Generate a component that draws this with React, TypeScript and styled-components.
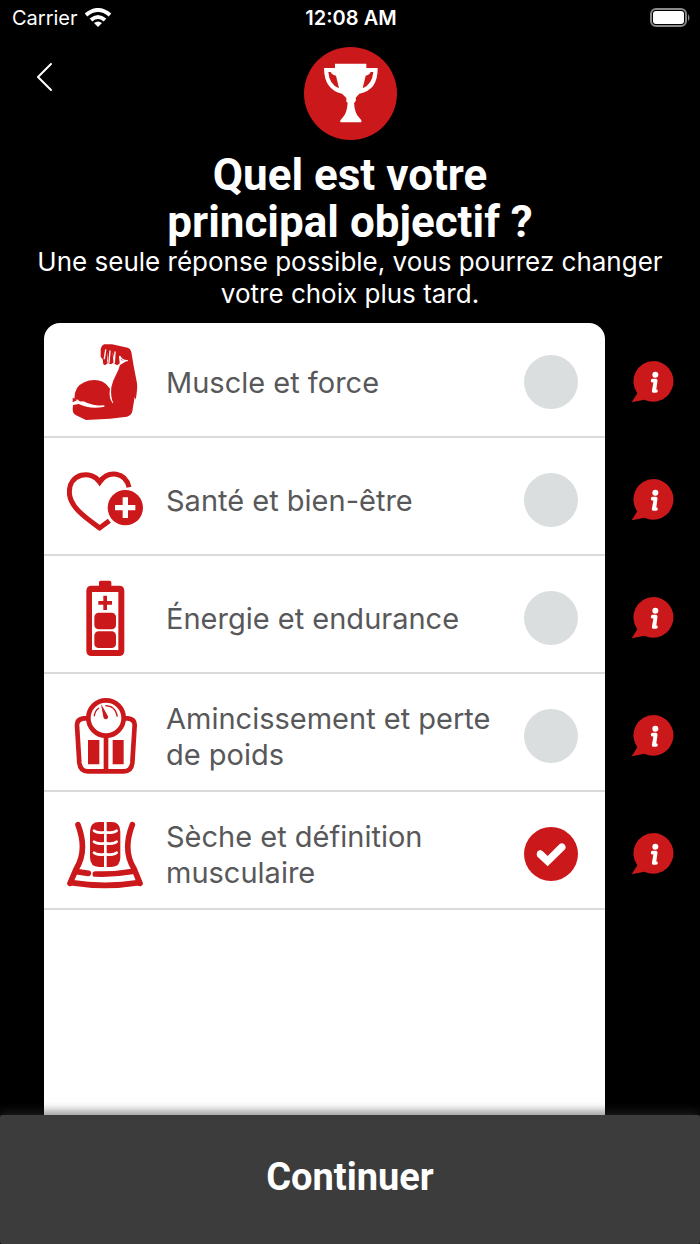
import React, { useState } from 'react';
import styled, { createGlobalStyle } from 'styled-components';

const red = '#cb181b';

const GlobalStyle = createGlobalStyle`
  *, *::before, *::after { box-sizing: border-box; }
  html, body { margin: 0; background: #000; }
  body { font-family: Inter, "Noto Sans", sans-serif; color: #fff; }
`;

const Screen = styled.div`
  display: flex;
  flex-direction: column;
  min-height: 100vh;
  background: #000;
`;

const StatusBar = styled.div`
  display: grid;
  grid-template-columns: 1fr auto 1fr;
  align-items: center;
  height: 36px;
  padding: 0 10px 0 12px;
  font-size: 20px;
  line-height: 24px;
`;

const Network = styled.div`
  display: flex;
  align-items: center;
  gap: 6px;
`;

const Clock = styled.time`
  font-weight: 600;
`;

const BatteryIcon = styled.svg`
  justify-self: end;
  width: 40px;
  height: 20px;
`;

const WifiIcon = styled.svg`
  width: 28px;
  height: 20px;
`;

const Header = styled.header`
  display: grid;
  grid-template-columns: 1fr auto 1fr;
  align-items: start;
  padding: 11px 22px 0;
`;

const BackButton = styled.button`
  display: grid;
  place-items: center;
  width: 44px;
  height: 60px;
  padding: 0;
  border: 0;
  background: none;
  cursor: pointer;
`;

const Trophy = styled.svg`
  display: block;
  width: 93px;
  height: 93px;
`;

const Intro = styled.div`
  padding: 12px 36px 13px;
  text-align: center;
`;

const Title = styled.h1`
  max-width: 400px;
  margin: 0 auto;
  font: 700 44px/47px Roboto, sans-serif;
`;

const Subtitle = styled.p`
  margin: 0;
  font-size: 26px;
  line-height: 32px;
`;

const Choices = styled.div`
  display: flex;
  flex: 1;
  flex-direction: column;
  padding-left: 44px;
`;

const Row = styled.div`
  display: grid;
  grid-template-columns: 1fr 95px;
`;

const Option = styled.label<{ $first: boolean }>`
  display: grid;
  grid-template-columns: 76px 1fr 54px;
  align-items: center;
  column-gap: 23px;
  min-height: ${p => (p.$first ? 115 : 118)}px;
  padding: ${p => (p.$first ? 5 : 8)}px 27px 0 23px;
  border-bottom: 2px solid #d9dbdb;
  border-radius: ${p => (p.$first ? '16px 16px 0 0' : 0)};
  background: #fff;
  color: #58585a;
  font-size: 29px;
  line-height: 36px;
  cursor: pointer;
`;

const OptionText = styled.span`
  padding-top: 2px;
`;

const OptionIcon = styled.svg`
  width: 76px;
  height: 76px;
  fill: ${red};
`;

const Control = styled.span`
  display: grid;
  width: 54px;
  height: 54px;

  > * { grid-area: 1 / 1; }
`;

const Radio = styled.input`
  appearance: none;
  width: 54px;
  height: 54px;
  margin: 0;
  border-radius: 50%;
  background: #dadedf;
  cursor: pointer;

  &:checked { background: ${red}; }
  & + svg { visibility: hidden; }
  &:checked + svg { visibility: visible; }
`;

const Check = styled.svg`
  width: 54px;
  height: 54px;
  pointer-events: none;
`;

const InfoButton = styled.button<{ $first: boolean }>`
  display: flex;
  align-items: center;
  padding: ${p => (p.$first ? 5 : 8)}px 0 2px 27px;
  border: 0;
  background: none;
  cursor: pointer;
`;

const CardRest = styled.div`
  flex: 1;
  min-height: 40px;
  margin-right: 95px;
  background: #fff;
`;

const Footer = styled.footer`
  position: sticky;
  bottom: 0;
  box-shadow: 0 -4px 9px rgba(50, 50, 50, 0.5);
`;

const Continue = styled.button`
  display: block;
  width: 100%;
  height: 129px;
  padding: 0 0 6px;
  border: 0;
  border-radius: 2px;
  background: #3c3c3c;
  color: #fff;
  font: 700 38px/44px Roboto, sans-serif;
  cursor: pointer;
`;

const MuscleIcon = () => (
  <OptionIcon viewBox="36 42 228 228" aria-hidden="true">
    <path d="M147 43 L171 43 L218 53 Q227 56 229 66 L236 108 L246 160 Q248 178 242 209 L239 201 L232 244 Q229 257 216 260 L165 266 L93 270 L63 256 Q53 251 53 238 L54 225 L71 222 Q103 238 145 231 L148 228 Q112 228 85 214 L66 216 L72 210 L58 207 Q57 190 66 174 Q83 151 119 150 Q146 151 160 170 L165 176 Q160 203 173 220 L175 219 Q166 201 169 172 Q173 153 181 139 Q191 121 195 105 L216 92 L199 91 L193 78 L196 98 L187 106 L176 100 L177 84 L173 66 L175 98 L168 103 L159 99 L157 66 L156 92 L158 100 L150 106 L145 103 L143 88 L137 81 L137 57 Q139 46 147 43Z" />
    <path d="M148 86 L152 60 M162 97 L165 63 M178 98 L180 66 M196 98 L194 78 Q200 92 217 92" fill="none" stroke="#fff" strokeWidth="4" strokeLinecap="round" />
    <path d="M53 207 L64 213 L53 220 M66 212 Q101 234 148 228" fill="none" stroke="#fff" strokeWidth="4" />
    <path d="M53 203 L67 210 L53 217Z" />
  </OptionIcon>
);

const HealthIcon = () => (
  <OptionIcon viewBox="36 36 228 228" aria-hidden="true">
    <path d="M222 112 C212 66 160 59 134 96 C108 58 43 70 43 126 C43 169 87 200 134 234 L163 212" fill="none" stroke={red} strokeWidth="15" />
    <circle cx="211" cy="173" r="53" />
    <path d="M203 142h16v23h22v16h-22v23h-16v-23h-23v-16h23z" fill="#fff" />
  </OptionIcon>
);

const EnergyIcon = () => (
  <OptionIcon viewBox="36 30 228 228" aria-hidden="true">
    <path fillRule="evenodd" d="M132 47V37q0-5 5-5h27q5 0 5 5v10h23q16 0 16 16v179q0 16-16 16h-82q-16 0-16-16V63q0-16 16-16z M111 66v174h79V66z" />
    <path d="M145 77h11v16h15v11h-15v16h-11v-16h-15V93h15z" />
    <rect x="118" y="128" width="65" height="50" rx="13" />
    <rect x="118" y="184" width="65" height="50" rx="13" />
  </OptionIcon>
);

const ScaleIcon = () => (
  <OptionIcon viewBox="36 27 228 228" aria-hidden="true">
    <g fill="none" stroke={red}>
      <path d="M98 88 H86 Q65 91 66 109 L73 222 Q76 247 99 247 H206 Q229 247 232 222 L239 109 Q240 91 219 88 H208" strokeWidth="14" />
      <path d="M153 142V245" strokeWidth="14" />
      <circle cx="153" cy="87" r="53" strokeWidth="14" />
      <path d="M118 82 Q119 65 132 57 M151 50 Q181 50 187 83" strokeWidth="4" />
    </g>
    <path d="M138 45 L159 82 Q160 91 152 91 Q145 90 145 83Z" />
    <path d="M99 153h34v73H99z M173 153h33v73h-33z" />
  </OptionIcon>
);

const AbsIcon = () => (
  <OptionIcon viewBox="36 36 228 228" aria-hidden="true">
    <path d="M132 54h37q27 0 27 29v77q0 29-27 29h-37q-27 0-27-29V83q0-29 27-29z" />
    <g fill="none" stroke={red} strokeWidth="17" strokeLinecap="round">
      <path d="M69 62 Q98 139 64 194 L45 238 M232 62 Q202 139 237 194 L255 238" />
      <path d="M65 203 L100 208 M121 210 Q181 212 237 202 M48 236 Q150 252 252 236" />
    </g>
    <g fill="none" stroke="#fff" strokeWidth="8">
      <path d="M151 52V191" />
      <path d="M117 80 Q124 88 148 85 M117 113 Q124 121 148 118 M117 146 Q124 154 148 151 M185 80 Q178 88 154 85 M185 113 Q178 121 154 118 M185 146 Q178 154 154 151" strokeLinecap="round" />
    </g>
  </OptionIcon>
);

const InfoIcon = () => (
  <svg width="42" height="42" viewBox="365 71 126 126" aria-hidden="true">
    <path d="M430 71 A61 61 0 1 1 402 187 L364 195 L381 168 A61 61 0 0 1 430 71Z" fill={red} />
    <circle cx="435" cy="112" r="9" fill="#fff" />
    <path d="M427 130H436L430 161H437 M436 130L432 159" fill="none" stroke="#fff" strokeWidth="11" strokeLinecap="round" strokeLinejoin="round" />
  </svg>
);

const options = [
  { id: 'muscle', label: 'Muscle et force', Icon: MuscleIcon },
  { id: 'sante', label: 'Santé et bien-être', Icon: HealthIcon },
  { id: 'energie', label: 'Énergie et endurance', Icon: EnergyIcon },
  { id: 'poids', label: 'Amincissement et perte de poids', Icon: ScaleIcon },
  { id: 'seche', label: 'Sèche et définition musculaire', Icon: AbsIcon },
];

export default function App() {
  const [selected, setSelected] = useState('seche');

  return (
    <Screen>
      <GlobalStyle />
      <StatusBar>
        <Network>
          <span>Carrier</span>
          <WifiIcon viewBox="0 0 28 20" aria-hidden="true">
            <g fill="none" stroke="#fff" strokeWidth="4">
              <path d="M2 7 Q14 -3 26 7" />
              <path d="M7 12 Q14 6 21 12" />
            </g>
            <path d="M10 15 Q14 12 18 15 L14 19Z" fill="#fff" />
          </WifiIcon>
        </Network>
        <Clock>12:08 AM</Clock>
        <BatteryIcon viewBox="0 0 40 20" role="img" aria-label="Batterie">
          <rect x="1" y="1" width="35" height="17" rx="5" fill="none" stroke="#8a8a8a" strokeWidth="2" />
          <rect x="3" y="3" width="31" height="13" rx="3" fill="#fff" />
          <path d="M38 6 Q41 10 38 13Z" fill="#8a8a8a" />
        </BatteryIcon>
      </StatusBar>

      <Header>
        <BackButton type="button" aria-label="Retour">
          <svg width="18" height="30" viewBox="0 0 18 30" fill="none" stroke="#fff" strokeWidth="2" strokeLinecap="round" strokeLinejoin="round" aria-hidden="true">
            <path d="M16 2 L3 15 L16 28" />
          </svg>
        </BackButton>
        <Trophy viewBox="71 51 279 279" aria-hidden="true">
          <circle cx="210.500" cy="190.500" r="139.500" fill={red} />
          <path d="M164 101h94v13h34Q293 181 237 191 L226 203 L227 210 L224 217 L221 218 Q223 251 237 263 L243 271V277H180V271L186 264Q200 250 202 218 L198 215V204L185 191Q131 179 131 114h33z" fill="#fff" />
          <path d="M144 126h7q5 10 16 11l9 38Q147 164 144 126z M279 126h-8q-5 10-15 11l-9 38Q275 164 279 126z" fill={red} />
        </Trophy>
      </Header>

      <Intro>
        <Title>Quel est votre principal objectif ?</Title>
        <Subtitle>Une seule réponse possible, vous pourrez changer votre choix plus tard.</Subtitle>
      </Intro>

      <Choices role="radiogroup" aria-label="Objectif principal">
        {options.map(({ id, label, Icon }, i) => (
          <Row key={id}>
            <Option $first={i === 0} htmlFor={id}>
              <Icon />
              <OptionText>{label}</OptionText>
              <Control>
                <Radio
                  id={id}
                  type="radio"
                  name="objectif"
                  checked={selected === id}
                  onChange={() => setSelected(id)}
                />
                <Check viewBox="42 54 162 162" aria-hidden="true">
                  <path d="M81 142 Q77 126 91 123 Q96 123 113 141 L149 105 Q155 101 162 105 Q170 113 165 121 L113 172Z" fill="#fff" />
                </Check>
              </Control>
            </Option>
            <InfoButton $first={i === 0} type="button" aria-label={`Informations : ${label}`}>
              <InfoIcon />
            </InfoButton>
          </Row>
        ))}
        <CardRest />
      </Choices>

      <Footer>
        <Continue type="button">Continuer</Continue>
      </Footer>
    </Screen>
  );
}
